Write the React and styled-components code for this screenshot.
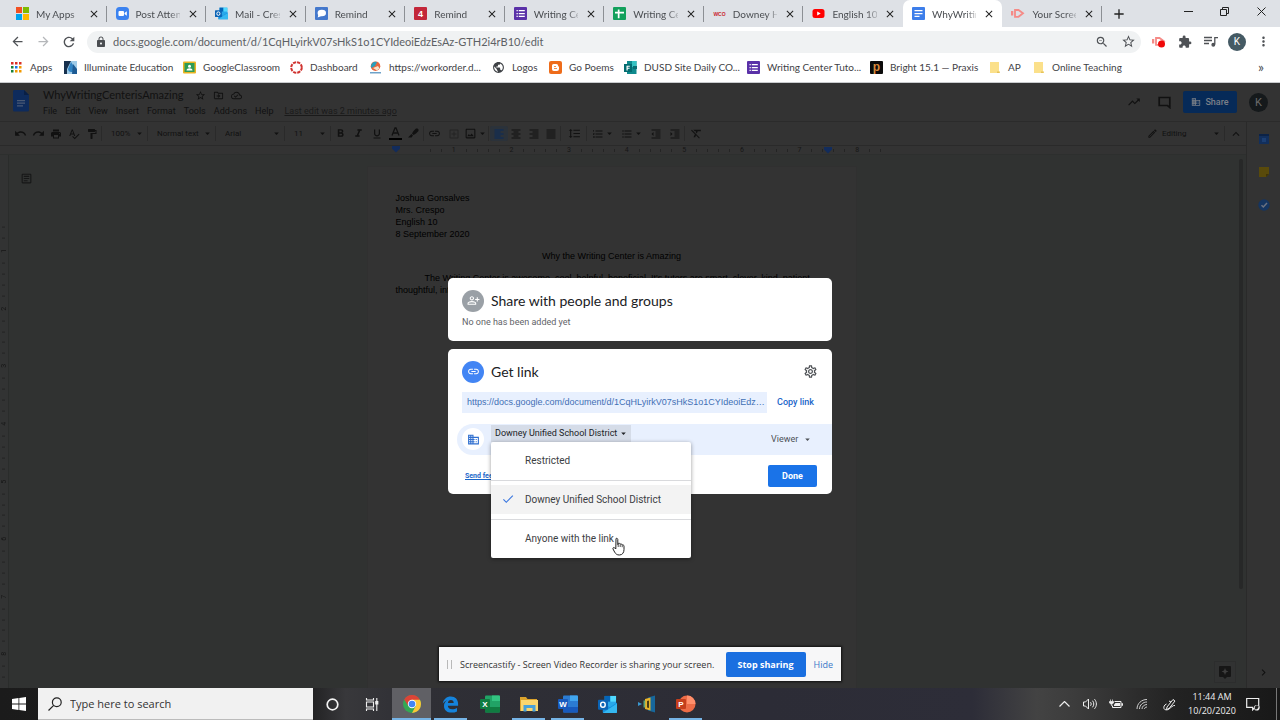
import React from "react";
import styled, { createGlobalStyle, css } from "styled-components";
import {
  MdArrowBack, MdArrowForward, MdRefresh, MdLock, MdStarBorder, MdExtension, MdMoreVert,
  MdUndo, MdRedo, MdPrint, MdSpellcheck, MdFormatPaint, MdFormatBold, MdFormatItalic,
  MdFormatUnderlined, MdLink, MdOutlineAddBox, MdOutlineImage, MdFormatAlignLeft,
  MdFormatAlignCenter, MdFormatAlignRight, MdFormatAlignJustify, MdFormatLineSpacing,
  MdFormatListNumbered, MdFormatListBulleted, MdFormatIndentDecrease, MdFormatIndentIncrease,
  MdFormatClear, MdOutlineEdit, MdKeyboardArrowUp, MdArrowDropDown, MdTrendingUp,
  MdOutlineDriveFileMove, MdOutlineCloudDone, MdDomain, MdOutlinePersonAddAlt, MdOutlineSettings,
  MdCheck, MdClose, MdAdd, MdKeyboardArrowRight, MdOutlineArticle, MdPublic, MdZoomOut,
} from "react-icons/md";

const ui = `"Open Sans", "Noto Sans", sans-serif`;
const uiNarrow = `Lato, "Open Sans", sans-serif`;
const roboto = `Roboto, "Liberation Sans", sans-serif`;
const arial = `"Liberation Sans", Arial, sans-serif`;
const display = `Lato, Roboto, sans-serif`;

const Global = createGlobalStyle`
  * { box-sizing: border-box; }
  html, body { margin: 0; padding: 0; }
  body { background: #333; font-family: ${ui}; overflow: hidden; }
  button, select, input { font: inherit; color: inherit; margin: 0; padding: 0; border: 0; background: none; }
  button { cursor: pointer; white-space: nowrap; }
  svg { display: block; flex: none; }
  ul { list-style: none; margin: 0; padding: 0; }
  h1, h2, p { margin: 0; font-weight: 400; }
`;

const Screen = styled.div`
  display: flex;
  flex-direction: column;
  min-height: 100vh;
`;

/* ---------- browser frame ---------- */

const BrowserFrame = styled.header`
  background: #fff;
  padding-bottom: 4px;
  border-bottom: 1px solid #c9cbce;
  color: #4a4d51;
  font-family: ${uiNarrow};
`;

const TabStrip = styled.div`
  display: flex;
  height: 27px;
  background: #dee1e6;
  padding-left: 7px;
`;

const TabList = styled.div`
  display: flex;
  flex: 1;
  min-width: 0;
`;

const Tab = styled.div`
  display: flex;
  align-items: center;
  flex: 1;
  min-width: 0;
  padding: 0 7px 0 9px;
  gap: 7px;
  position: relative;
  background: ${(p) => (p.$active ? "#fff" : "transparent")};
  border-radius: 7px 7px 0 0;
  ${(p) =>
    p.$divider &&
    css`
      &::after {
        content: "";
        position: absolute;
        right: 0;
        top: 6px;
        width: 1px;
        height: 16px;
        background: #8c8f94;
      }
    `}
`;

const TabTitle = styled.button`
  flex: 1;
  min-width: 0;
  overflow: hidden;
  white-space: nowrap;
  text-align: left;
  font-size: 10px;
  line-height: 16px;
  color: #4a4d51;
  mask-image: linear-gradient(to right, #000 75%, transparent 110%);
`;

const IconButton = styled.button`
  display: flex;
  align-items: center;
  justify-content: center;
  flex: none;
  width: ${(p) => p.$w || 26}px;
  height: ${(p) => p.$h || 26}px;
  color: ${(p) => p.$color || "#4f5256"};
`;

const WindowButtons = styled.div`
  display: flex;
  align-items: flex-start;
  padding: 0 1px 0 34px;
`;

const AddressRow = styled.div`
  display: flex;
  align-items: center;
  height: 29px;
  padding: 0 4px;
`;

const Omnibox = styled.div`
  display: flex;
  align-items: center;
  flex: 1;
  height: 22px;
  margin: 0 5px;
  padding-left: 8px;
  border-radius: 11px;
  background: #f0f2f3;
`;

const UrlInput = styled.input`
  flex: 1;
  min-width: 0;
  padding-left: 6px;
  font-size: 11px;
  line-height: 18px;
  color: #5d6165;
  outline: none;
`;

const Avatar = styled.span`
  display: flex;
  align-items: center;
  justify-content: center;
  width: ${(p) => p.$size}px;
  height: ${(p) => p.$size}px;
  border-radius: 50%;
  background: ${(p) => p.$bg};
  color: ${(p) => p.$fg};
  font-family: ${roboto};
  font-size: ${(p) => p.$font}px;
`;

const BookmarkBar = styled.nav`
  display: flex;
  align-items: center;
  height: 22px;
  padding: 0 6px 0 10px;
`;

const Bookmark = styled.a`
  display: flex;
  align-items: center;
  gap: 7px;
  width: ${(p) => p.$w}px;
  white-space: nowrap;
  font-size: 10px;
  line-height: 16px;
  color: #3f4246;
  text-decoration: none;
`;

const More = styled.button`
  margin-left: auto;
  width: 26px;
  font-size: 14px;
  line-height: 16px;
`;

/* ---------- document editor ---------- */

const Editor = styled.div`
  position: relative;
  flex: 1;
  display: flex;
  flex-direction: column;
  background: #333;
  color: #111;
  font-family: ${roboto};
  font-size: 9px;
`;

const DocHeader = styled.div`
  display: flex;
  height: 39px;
  padding: 5px 12px 0 13px;
  border-bottom: 1px solid #2b2b2b;
`;

const TitleBlock = styled.div`
  flex: 1;
  padding-left: 13px;
`;

const TitleRow = styled.div`
  display: flex;
  align-items: center;
  height: 14px;
  color: #111;
`;

const DocTitle = styled.h1`
  font-family: ${display};
  font-size: 11px;
  line-height: 14px;
  margin-right: 8px;
`;

const MenuRow = styled.div`
  display: flex;
  align-items: center;
  gap: 8px;
  height: 17px;
  line-height: 12px;
`;

const LastEdit = styled.a`
  margin-left: 3px;
  color: #1a1a1a;
`;

const HeaderActions = styled.div`
  display: flex;
  align-items: center;
  height: 28px;
`;

const ShareButton = styled.button`
  display: flex;
  align-items: center;
  justify-content: center;
  gap: 4px;
  width: 54px;
  height: 22px;
  margin: 0 12px 0 5px;
  border-radius: 2px;
  background: #062a58;
  color: #7b8088;
  font-size: 9px;
  font-weight: 500;
`;

const Workspace = styled.div`
  flex: 1;
  display: flex;
`;

const WorkColumn = styled.div`
  flex: 1;
  display: flex;
  flex-direction: column;
`;

const Toolbar = styled.div`
  display: flex;
  align-items: center;
  height: 24px;
  padding-left: 12px;
  border-bottom: 1px solid #2a2a2a;
`;

const ToolGroup = styled.div`
  display: flex;
  align-items: center;
  width: ${(p) => p.$w}px;
  height: 15px;
  margin-left: ${(p) => (p.$push ? "auto" : `${p.$ml || 0}px`)};
  border-right: ${(p) => (p.$last ? 0 : 1)}px solid #2a2a2a;
`;

const Tool = styled.button`
  display: flex;
  align-items: center;
  justify-content: center;
  flex: ${(p) => (p.$w ? `0 0 ${p.$w}px` : 1)};
  height: 15px;
  border-radius: 2px;
  color: ${(p) => (p.$on ? "#0a2a5a" : "#111")};
  background: ${(p) => (p.$on ? "#2b323a" : "none")};
`;

const Picker = styled.label`
  display: flex;
  align-items: center;
  width: 100%;
  padding-left: ${(p) => p.$pad ?? 9}px;
  padding-right: ${(p) => p.$end ?? 2}px;
  select {
    appearance: none;
    flex: 1;
    min-width: 0;
    outline: none;
    font-size: 8px;
    line-height: 12px;
  }
`;

const HorizontalRuler = styled.div`
  display: flex;
  height: 9px;
  padding-left: 368px;
  border-bottom: 1px solid #2d2f2e;
  color: #161616;
`;

const RulerMargin = styled.div`
  display: flex;
  justify-content: flex-end;
  width: 57px;
  padding-right: 25px;
`;

const RulerScale = styled.div`
  display: grid;
  grid-template-columns: repeat(8, 1fr);
  width: 461px;
`;

const RulerCell = styled.div`
  display: flex;
  position: relative;
  align-items: center;
  justify-content: space-around;
  writing-mode: ${(p) => (p.$vertical ? "vertical-rl" : "horizontal-tb")};
  transform: ${(p) => (p.$vertical ? "rotate(180deg)" : "none")};
  font-size: 7px;
  line-height: 8px;
`;

const Tick = styled.i`
  width: ${(p) => (p.$vertical ? 3 : 1)}px;
  height: ${(p) => (p.$vertical ? 1 : 3)}px;
  background: #242424;
`;

const RightMarker = styled.span`
  position: absolute;
  right: -4px;
  top: 1px;
`;

const CanvasRow = styled.div`
  flex: 1;
  display: flex;
  background: #303231;
`;

const VerticalRuler = styled.div`
  width: 9px;
  padding-top: 67px;
  background: #323333;
  border-right: 1px solid #2a2c2b;
  color: #161616;
`;

const VerticalScale = styled.div`
  display: grid;
  grid-template-rows: repeat(8, 1fr);
  height: 461px;
`;

const Canvas = styled.div`
  position: relative;
  flex: 1;
  display: flex;
  justify-content: center;
  padding: 11px 25px 0 0;
`;

const OutlineButton = styled.button`
  position: absolute;
  left: 11px;
  top: 17px;
  color: #161717;
`;

const ExploreButton = styled.button`
  position: absolute;
  right: 3px;
  bottom: 5px;
  width: 22px;
  height: 22px;
  display: flex;
  align-items: center;
  justify-content: center;
  border: 1px solid #2c2d2d;
  background: #313232;
`;

const ScrollTrack = styled.div`
  width: 7px;
  padding-top: 4px;
`;

const ScrollThumb = styled.div`
  width: 4px;
  height: 430px;
  border-radius: 2px;
  background: #272828;
`;

const Paper = styled.article`
  width: 490px;
  padding: 25px 28px;
  background: #333;
  border: 1px solid #303030;
  border-bottom: 0;
  font-family: ${arial};
  font-size: 9px;
  line-height: 12px;
  color: #000;
`;

const Centered = styled.p`
  margin: 10px 0;
  text-align: center;
`;

const Indented = styled.p`
  text-indent: 29px;
`;

const SidePanel = styled.aside`
  display: flex;
  flex-direction: column;
  align-items: center;
  gap: 21px;
  width: 34px;
  padding: 11px 0 9px;
  border-left: 1px solid #2a2a2a;
`;

const PanelToggle = styled.button`
  margin-top: auto;
  color: #111;
`;

/* ---------- share dialog ---------- */

const Backdrop = styled.div`
  position: absolute;
  inset: 0;
  display: flex;
  align-items: center;
  justify-content: center;
`;

const Dialog = styled.div`
  display: flex;
  flex-direction: column;
  gap: 8px;
  width: 384px;
  color: #202124;
`;

const Card = styled.section`
  padding: 12px 0 ${(p) => p.$bottom}px;
  border-radius: 5px;
  background: #fff;
`;

const CardHead = styled.div`
  display: flex;
  align-items: center;
  gap: 7px;
  padding: 0 14px;
  height: 22px;
`;

const RoundIcon = styled.span`
  display: flex;
  align-items: center;
  justify-content: center;
  width: 22px;
  height: 22px;
  border-radius: 50%;
  background: ${(p) => p.$bg};
  color: ${(p) => p.$fg || "#fff"};
`;

const CardTitle = styled.h2`
  flex: 1;
  font-family: ${display};
  font-size: 14px;
  line-height: 20px;
`;

const CardNote = styled.p`
  padding: 4px 14px 0;
  font-size: 9px;
  line-height: 12px;
  color: #5f6368;
`;

const LinkRow = styled.div`
  display: flex;
  align-items: center;
  gap: 10px;
  padding: 0 18px 0 14px;
  margin-top: 9px;
`;

const LinkInput = styled.input`
  flex: 1;
  min-width: 0;
  height: 21px;
  padding: 0 1px 0 5px;
  background: #e8f0fe;
  color: #3f6fb5;
  font-family: ${arial};
  font-size: 9px;
  text-overflow: ellipsis;
  outline: none;
`;

const CopyButton = styled.button`
  color: #1a66c9;
  font-size: 9px;
  font-weight: 500;
`;

const AccessRow = styled.div`
  display: flex;
  align-items: center;
  gap: 7px;
  height: 31px;
  margin: 11px 0 0 9px;
  padding: 0 19px 0 5px;
  border-radius: 16px 0 0 16px;
  background: #e8f0fe;
`;

const AccessMenu = styled.div`
  position: relative;
  align-self: flex-start;
  padding-top: 1px;
`;

const AccessButton = styled.button`
  display: flex;
  align-items: center;
  justify-content: space-between;
  width: 140px;
  height: 17px;
  padding: 0 2px 0 4px;
  background: #d5dce8;
  font-size: 9px;
  color: #202326;
`;

const Menu = styled.ul`
  position: absolute;
  left: 0;
  top: 18px;
  z-index: 2;
  width: 200px;
  padding: 4px 0 5px;
  border-radius: 2px;
  background: #fff;
  box-shadow: 0 1px 4px rgba(0, 0, 0, 0.4);
`;

const MenuItem = styled.li`
  display: flex;
  align-items: center;
  height: 29px;
  padding-left: 10px;
  gap: 10px;
  font-size: 10px;
  color: #3c4043;
  background: ${(p) => (p.$selected ? "#f3f3f3" : "none")};
  &::before {
    content: "";
    display: ${(p) => (p.$selected ? "none" : "block")};
    width: 14px;
  }
`;

const MenuDivider = styled.li`
  height: 1px;
  margin: 5px 0 4px;
  background: #d9dadd;
`;

const RoleSelect = styled.label`
  display: flex;
  align-items: center;
  gap: 1px;
  margin-left: auto;
  color: #4d5156;
  select {
    appearance: none;
    width: 30px;
    outline: none;
  }
`;

const CardFoot = styled.div`
  display: flex;
  align-items: center;
  justify-content: space-between;
  margin-top: 10px;
  padding: 0 15px 0 17px;
`;

const FeedbackLink = styled.a`
  font-size: 7px;
  font-weight: 700;
  color: #1a66c9;
`;

const DoneButton = styled.button`
  width: 49px;
  height: 22px;
  border-radius: 2px;
  background: #1a73e8;
  color: #fff;
  font-size: 9px;
  font-weight: 700;
`;

const Pointer = styled.svg`
  position: absolute;
  left: 121px;
  top: 95px;
`;

const SharingBar = styled.div`
  position: absolute;
  left: 50%;
  bottom: 7px;
  transform: translateX(-50%);
  display: flex;
  align-items: center;
  width: 402px;
  height: 34px;
  padding: 0 8px;
  background: #f7f7f8;
  box-shadow: 0 0 2px 1px #111;
  font-family: ${ui};
  font-size: 9px;
  color: #333;
  white-space: nowrap;
`;

const Grip = styled.span`
  width: 5px;
  height: 9px;
  margin-right: 8px;
  border: solid #b9b9b9;
  border-width: 0 1px;
`;

const StopButton = styled.button`
  width: 80px;
  height: 25px;
  margin: 0 8px 0 auto;
  border-radius: 2px;
  background: #1a6fe0;
  color: #fff;
  font-weight: 700;
`;

const HideLink = styled.button`
  color: #3b78c8;
`;

/* ---------- task bar ---------- */

const TaskBar = styled.footer`
  display: flex;
  height: 32px;
  background: linear-gradient(to right, #1b1b1b 0, #1f1f20 24%, #38383b 27%, #2f2f35 32%, #2c2c36 60%, #2d2d38 76%, #434343 81%, #3c3c3c 84%, #222 92%, #181818 100%);
  color: #eee;
`;

const SearchBox = styled.label`
  display: flex;
  align-items: center;
  gap: 8px;
  width: 275px;
  padding-left: 10px;
  background: #f1f1f1;
  border-bottom: 1px solid #bbb;
  color: #222;
  input {
    flex: 1;
    min-width: 0;
    font-size: 11px;
    outline: none;
  }
  input::placeholder {
    color: #333;
    opacity: 1;
  }
`;

const TaskButton = styled.button`
  display: flex;
  align-items: center;
  justify-content: center;
  flex: none;
  width: ${(p) => p.$w || 39}px;
  background: ${(p) => (p.$active ? "#606065" : "none")};
  position: relative;
  &::after {
    content: "";
    position: absolute;
    left: ${(p) => (p.$active ? 0 : 3)}px;
    right: ${(p) => (p.$active ? 0 : 3)}px;
    bottom: 0;
    height: 2px;
    background: ${(p) => (p.$open ? "#76b4e6" : "transparent")};
  }
`;

const Tray = styled.div`
  display: flex;
  align-items: center;
  margin-left: auto;
  padding-right: 3px;
`;

const Clock = styled.time`
  width: 56px;
  text-align: center;
  font-size: 9px;
  line-height: 14px;
`;

const ShowDesktop = styled.button`
  width: 1px;
  height: 32px;
  margin-left: 10px;
  background: #777;
`;

/* ---------- drawings ---------- */

const Tile = ({ size = 13, color, letter, fg = "#fff", font = 9 }) => (
  <svg width={size} height={size} viewBox="0 0 13 13">
    <rect width="13" height="13" rx="1" fill={color} />
    <text x="6.5" y="10" fontSize={font} fontWeight="700" fontFamily="Liberation Sans" textAnchor="middle" fill={fg}>{letter}</text>
  </svg>
);

const MicrosoftLogo = () => (
  <svg width="13" height="13" viewBox="0 0 13 13">
    <path d="M0 0h6v6H0z" fill="#f25022" /><path d="M7 0h6v6H7z" fill="#7fba00" />
    <path d="M0 7h6v6H0z" fill="#00a4ef" /><path d="M7 7h6v6H7z" fill="#ffb900" />
  </svg>
);

const ZoomLogo = () => (
  <svg width="13" height="13" viewBox="0 0 13 13">
    <rect width="13" height="13" rx="3.5" fill="#3b82f0" />
    <rect x="2.5" y="4" width="5.5" height="5" rx="1" fill="#fff" /><path d="M8.5 6l2.3-1.7v4.4L8.5 7z" fill="#fff" />
  </svg>
);

const OutlookLogo = ({ size = 13 }) => (
  <svg width={size} height={size} viewBox="0 0 20 20">
    <path d="M7 1h12v12H7z" fill="#28a8ea" /><path d="M7 1h6v6H7z" fill="#0364b8" /><path d="M13 1h6v6h-6z" fill="#50d9ff" />
    <path d="M5 8l7.500 5L20 8v10a1 1 0 0 1-1 1H6a1 1 0 0 1-1-1z" fill="#1490df" /><path d="M5 19L20 9v9a1 1 0 0 1-1 1z" fill="#35b8f1" />
    <rect y="5" width="10.500" height="10.500" rx="1" fill="#0a63b5" />
    <ellipse cx="5.200" cy="10.200" rx="2.400" ry="2.700" fill="none" stroke="#fff" strokeWidth="1.500" />
  </svg>
);

const RemindLogo = () => (
  <svg width="13" height="13" viewBox="0 0 13 13">
    <rect width="13" height="13" rx="1" fill="#4478cc" />
    <ellipse cx="6.800" cy="6" rx="4.200" ry="3.200" fill="#fff" /><path d="M3.500 7l-.8 3.500L6.500 9z" fill="#fff" />
  </svg>
);

const FormsLogo = () => (
  <svg width="13" height="13" viewBox="0 0 13 13">
    <rect width="13" height="13" rx="1" fill="#5a31a8" />
    <path d="M2.500 3h1.300v1.300H2.500zM2.500 5.900h1.300v1.300H2.500zM2.500 8.800h1.300v1.300H2.500zM4.800 3h6v1.300h-6zM4.800 5.900h6v1.300h-6zM4.800 8.800h6v1.300h-6z" fill="#fff" />
  </svg>
);

const SheetsLogo = () => (
  <svg width="13" height="13" viewBox="0 0 13 13">
    <rect width="13" height="13" rx="1" fill="#12a05c" /><path d="M4.800 2.500h1.700v2.300h4.500v1.700H6.500v4.700H4.800V6.500H2V4.800h2.800z" fill="#fff" />
  </svg>
);

const WcoLogo = () => (
  <svg width="13" height="13" viewBox="0 0 13 13">
    <text x="6.500" y="8.500" fontSize="5" fontWeight="700" fontFamily="Liberation Sans" textAnchor="middle" fill="#c9252b">WCO</text>
  </svg>
);

const YoutubeLogo = () => (
  <svg width="13" height="13" viewBox="0 0 13 13">
    <rect x=".5" y="2" width="12" height="9" rx="2.500" fill="#f00" /><path d="M5.200 4.500l3.500 2-3.500 2z" fill="#fff" />
  </svg>
);

const DocsTabLogo = () => (
  <svg width="13" height="13" viewBox="0 0 13 13">
    <rect width="13" height="13" rx="1" fill="#3d7eea" />
    <path d="M2.500 3h8v1.300h-8zM2.500 5.900h8v1.300h-8zM2.500 8.800h5v1.300h-5z" fill="#fff" />
  </svg>
);

const ScreencastifyLogo = ({ recording }) => (
  <svg width="14" height="13" viewBox="0 0 14 13">
    <path d="M4 3h3.500l4.500 3.200L7.500 9.800H4z" fill="none" stroke="#f58b87" strokeWidth="1.800" />
    <path d="M0 4h2.300v4.500H0z" fill="#f58b87" />
    {recording && <circle cx="9.500" cy="9" r="3.500" fill="#f00808" />}
  </svg>
);

const AppsGrid = () => (
  <svg width="13" height="13" viewBox="0 0 13 13">
    {[0, 1, 2].map((r) => [0, 1, 2].map((c) => (
      <rect key={`${r}${c}`} x={1 + c * 4} y={1 + r * 4} width="2.500" height="2.500"
        fill={[["#d93025", "#d93025", "#d93025"], ["#188038", "#1a73e8", "#f29900"], ["#188038", "#f29900", "#f29900"]][r][c]} />
    )))}
  </svg>
);

const IlluminateLogo = () => (
  <svg width="13" height="13" viewBox="0 0 13 13">
    <rect width="13" height="13" fill="#9fcbe8" /><path d="M0 0h7L3 8v5H0z" fill="#17304d" />
    <path d="M7 1l4 6a3.500 3.500 0 0 1-7 1z" fill="#3184c4" /><path d="M9 3l4 5v5H8z" fill="#1d5b94" />
  </svg>
);

const ClassroomLogo = () => (
  <svg width="13" height="13" viewBox="0 0 13 13">
    <rect y=".5" width="13" height="12" rx="1" fill="#eab421" /><rect x="1.500" y="2" width="10" height="9" fill="#2e9b57" />
    <circle cx="6.500" cy="5.300" r="1.500" fill="#fff" /><path d="M3.500 9.500c0-3 6-3 6 0z" fill="#fff" />
  </svg>
);

const DashboardLogo = () => (
  <svg width="13" height="13" viewBox="0 0 13 13">
    <circle cx="6.500" cy="6.500" r="5.300" fill="none" stroke="#d0322f" strokeWidth="2" strokeDasharray="3.200 .96" />
  </svg>
);

const WorkorderLogo = () => (
  <svg width="13" height="13" viewBox="0 0 13 13">
    <circle cx="6.500" cy="5.200" r="4.800" fill="#e8663c" /><path d="M2 7a4.800 4.800 0 0 1 6-6L6 5z" fill="#28a0bd" />
    <path d="M4 7l5-2 1.500 2.500L8 9.500z" fill="#f6e3c8" /><path d="M1 11h11v1.500H1z" fill="#6fa2c8" />
  </svg>
);

const BloggerLogo = () => (
  <svg width="13" height="13" viewBox="0 0 13 13">
    <rect width="13" height="13" rx="2" fill="#ee6c1a" />
    <path d="M4.500 3h2.700a2 2 0 0 1 2 2v.6h.8V8a2 2 0 0 1-2 2H4.800a1.800 1.800 0 0 1-1.800-1.800V4.500A1.500 1.500 0 0 1 4.500 3z" fill="#fff" />
    <path d="M5 5h2v.8H5zM5 7.300h3v.8H5z" fill="#ee6c1a" />
  </svg>
);

const OfficeFormsLogo = () => (
  <svg width="13" height="13" viewBox="0 0 13 13">
    <path d="M3 0h9.500v13H3z" fill="#0f8a8d" /><path d="M8 0h4.500v6H8z" fill="#36c2c2" /><rect y="3" width="8" height="8" fill="#036c70" />
    <path d="M2.500 4.800h3.300v1H3.700v.9h1.900v1H3.700v1.800H2.500z" fill="#fff" /><path d="M9 5h4v3H9z" fill="#0b6e72" />
  </svg>
);

const Folder = () => (
  <svg width="13" height="13" viewBox="0 0 13 13">
    <path d="M2 1h9v9.500h1V12H2z" fill="#fbe08a" /><path d="M9 10.500h2.500V12H9z" fill="#e5c25a" />
  </svg>
);

const PlaylistIcon = () => (
  <svg width="14" height="12" viewBox="0 0 14 12" fill="none" stroke="#4f5256" strokeWidth="1.300">
    <path d="M0 1.500h8M0 4.500h8M0 7.500h5M10.800 8.500V1.600H14" /><circle cx="9.300" cy="8.800" r="1.300" fill="#4f5256" />
  </svg>
);

const RestoreIcon = () => (
  <svg width="9" height="9" viewBox="0 0 9 9" fill="none" stroke="#222">
    <path d="M.5 2.500h6v6h-6zM2.500 2.500v-2h6v6h-2" />
  </svg>
);

const MinimizeIcon = () => (
  <svg width="9" height="9" viewBox="0 0 9 9" stroke="#222"><path d="M0 4.500h9" /></svg>
);

const CrossIcon = () => (
  <svg width="9" height="9" viewBox="0 0 9 9" stroke="#222"><path d="M.5.5l8 8M8.500.5l-8 8" /></svg>
);

const DocsLogo = () => (
  <svg width="17" height="25" viewBox="0 0 17 25">
    <path d="M2 2h9l5 5v15a1.500 1.500 0 0 1-1.500 1.500h-13A1.500 1.500 0 0 1 0 22V3.500A1.500 1.500 0 0 1 2 2z" fill="#0e2b5c" />
    <path d="M11 2l5 5h-5z" fill="#091f45" /><path d="M4 12h8v1.200H4zM4 14.600h8v1.200H4zM4 17.200h6v1.200H4z" fill="#4a5a75" />
  </svg>
);

const TextColorIcon = () => (
  <svg width="13" height="13" viewBox="0 0 13 13">
    <path d="M3 8.500L6 1h1l3 7.500M4 6h5" fill="none" stroke="#111" strokeWidth="1.300" /><path d="M0 11h13v2H0z" fill="#000" />
  </svg>
);

const HighlighterIcon = () => (
  <svg width="11" height="11" viewBox="0 0 11 11"><path d="M5.500 3L8 .5h1.500l1 1V3L8 5.500 5.500 7 4 5.500zM3.500 6L5 7.500 3.500 9.500H0z" fill="#111" /></svg>
);

const CommentIcon = () => (
  <svg width="13" height="13" viewBox="0 0 13 13"><path d="M1.200 1.500h10.600v10L9.500 9.500H1.200z" fill="none" stroke="#111" strokeWidth="1.700" /></svg>
);

const CalendarLogo = () => (
  <svg width="12" height="12" viewBox="0 0 12 12"><rect x="1" y="1" width="10" height="10" fill="#122f5c" /><path d="M1 1h10v2H1z" fill="#0c2347" /><path d="M4 5h4v4H4z" fill="#1c3f73" /></svg>
);

const KeepLogo = () => (
  <svg width="12" height="12" viewBox="0 0 12 12"><path d="M1 1h10v7l-3 3H1z" fill="#594a0b" /><path d="M8 11V8h3z" fill="#403507" /></svg>
);

const TasksLogo = () => (
  <svg width="12" height="12" viewBox="0 0 12 12"><circle cx="6" cy="6" r="5.700" fill="#153560" /><path d="M3.500 6.300l1.800 1.700 3.700-4" fill="none" stroke="#6b7280" strokeWidth="1.500" /></svg>
);

const ExploreIcon = () => (
  <svg width="12" height="13" viewBox="0 0 12 13"><path d="M1 0h10a1 1 0 0 1 1 1v9a1 1 0 0 1-1 1H8l-2 2-2-2H1a1 1 0 0 1-1-1V1a1 1 0 0 1 1-1z" fill="#161616" /><path d="M6 2l1 2.500L9.500 5.500 7 6.500 6 9 5 6.500 2.500 5.500 5 4.500z" fill="#3d3d3d" /></svg>
);

const MarginMarker = () => (
  <svg width="8" height="7" viewBox="0 0 8 7"><path d="M0 0h8v2.500L4 6.500 0 2.500z" fill="#122c5c" /></svg>
);

const ChromeLogo = () => (
  <svg width="18" height="18" viewBox="0 0 18 18">
    <circle cx="9" cy="9" r="9" fill="#34a853" />
    <path d="M9 9L1.200 4.500A9 9 0 0 1 16.800 4.500z" fill="#db4437" />
    <path d="M9 4.800h7.950A9 9 0 0 1 9 18l3.700-7z" fill="#fbc638" /><path d="M1.200 4.500L5.300 11 9 4.800z" fill="#db4437" />
    <circle cx="9" cy="9" r="4.200" fill="#fff" /><circle cx="9" cy="9" r="3.300" fill="#4285f4" />
  </svg>
);

const EdgeLogo = () => (
  <svg width="17" height="17" viewBox="0 0 17 17">
    <path d="M.8 7.500C1.500 3.200 4.600.5 8.800.5c4.600 0 7.300 3.200 7.300 7.300v2H5.800c.2 2.400 2 3.500 4.400 3.500 1.800 0 3.400-.5 4.800-1.400v3.500c-1.500.8-3.300 1.200-5.300 1.200-4.700 0-7.700-2.700-7.700-6.700 0-2.600 1.300-4.700 3.600-5.900C4.200 4.500 2.300 5.500.8 7.500zM5.900 6.900h5.800c0-1.700-1-2.900-2.800-2.900S6.100 5.200 5.900 6.900z" fill="#1583dc" />
  </svg>
);

const OfficeTile = ({ base, light, dark, letter, round }) => (
  <svg width="20" height="18" viewBox="0 0 20 18">
    {round ? (
      <><circle cx="11" cy="9" r="8.500" fill={base} /><path d="M11 .5A8.500 8.500 0 0 1 19.500 9H11z" fill={light} /></>
    ) : (
      <><rect x="5" y=".5" width="15" height="17" rx="1" fill={base} /><path d="M12 .5h7a1 1 0 0 1 1 1V6h-8z" fill={light} /><path d="M5 12h15v4.500a1 1 0 0 1-1 1H6a1 1 0 0 1-1-1z" fill={dark} /></>
    )}
    <rect y="4" width="10" height="10" rx="1" fill={dark} />
    <text x="5" y="12" fontSize="8" fontWeight="700" fontFamily="Liberation Sans" textAnchor="middle" fill="#fff">{letter}</text>
  </svg>
);

const ExplorerLogo = () => (
  <svg width="18" height="16" viewBox="0 0 18 16">
    <path d="M0 1h6l1.500 2H17v12H0z" fill="#dba32c" /><path d="M1 4h17v11H1z" fill="#fbd66e" />
    <path d="M3.500 9h12v6.500h-3V12H6.500v3.500h-3z" fill="#48a1da" />
  </svg>
);

const ReaderLogo = () => (
  <svg width="18" height="18" viewBox="0 0 18 18">
    <path d="M10 2.500L17 .5v17L10 15.500z" fill="#17679b" /><path d="M7 4l5.500-1.500v13L7 14z" fill="#e6b52c" />
    <path d="M9 6l2-.5v7.500l-2-.5z" fill="#4a3d16" /><path d="M5.500 5.500h1.700v7H5.500z" fill="#58a37c" /><path d="M0 7l4 2-4 2z" fill="#3a97cf" />
  </svg>
);

const WindowsLogo = () => (
  <svg width="14" height="14" viewBox="0 0 14 14" fill="#fff"><path d="M0 2l6.500-.9v5.500H0zM7.300 1L14 0v6.600H7.300zM0 7.400h6.500v5.500L0 12zM7.300 7.400H14V14l-6.700-1z" /></svg>
);

const SearchIcon = () => (
  <svg width="14" height="14" viewBox="0 0 14 14" fill="none" stroke="#222" strokeWidth="1.200"><circle cx="8.800" cy="5.200" r="4.400" /><path d="M5.700 8.300L.5 13.500" /></svg>
);

const CortanaIcon = () => (
  <svg width="13" height="13" viewBox="0 0 13 13"><circle cx="6.500" cy="6.500" r="5.300" fill="none" stroke="#f3f3f3" strokeWidth="1.700" /></svg>
);

const TaskViewIcon = () => (
  <svg width="14" height="13" viewBox="0 0 14 13" fill="none" stroke="#eee" strokeWidth="1.100"><path d="M1.500 4h7v5h-7zM1.500 0v2h7V0M1.500 13v-2h7v2M11.800 0v13" /><path d="M10.800 3.500h2v2.500h-2z" fill="#eee" /></svg>
);

const ChevronUp = () => (
  <svg width="11" height="6" viewBox="0 0 11 6" fill="none" stroke="#eee" strokeWidth="1.200"><path d="M.5 5.500l5-5 5 5" /></svg>
);

const VolumeIcon = () => (
  <svg width="14" height="12" viewBox="0 0 14 12" fill="none" stroke="#eee"><path d="M.5 4h2L5.500 1v10L2.500 8h-2zM7.500 4.200c.9 1 .9 2.600 0 3.600M9.500 2.700c1.700 2 1.700 4.600 0 6.600M11.500 1.200c2.500 3 2.500 6.600 0 9.600" /></svg>
);

const BatteryIcon = () => (
  <svg width="14" height="11" viewBox="0 0 14 11">
    <path d="M5.500 2.500h6.500v6H3.500v-2" fill="none" stroke="#eee" /><path d="M6.500 4H11v3H5V5.500z" fill="#eee" />
    <path d="M12.500 4.200H14v2.600h-1.500z" fill="#eee" />
    <path d="M1.500.5v2M3.500.5v2M.5 2.500h4V4L3.300 5H1.700L.5 4zM2.500 5v2" fill="#eee" stroke="#eee" strokeWidth=".7" />
  </svg>
);

const WifiIcon = () => (
  <svg width="12" height="12" viewBox="0 0 12 12" fill="none" stroke="#ccc"><path d="M1 11C1 5.500 5.500 1.500 11 1.500M3.500 11c0-4 3.500-7 7.500-7M6 11c0-2.500 2.200-4.500 5-4.500M8.500 11c0-1.200 1-2 2.500-2" /></svg>
);

const PenIcon = () => (
  <svg width="14" height="13" viewBox="0 0 14 13" fill="none" stroke="#eee"><path d="M4 9l6-7.500 2 1.500-6 7.500-2.500 1zM3.500 6C1 7 .5 9 1 10.500s3 2 5 .5 4-4 6-3.500M8 4L6 3" /></svg>
);

const NotificationIcon = () => (
  <svg width="14" height="14" viewBox="0 0 14 14"><path d="M.7 1.500h12v8.800H9L6.700 12.800V10.300h-6z" fill="none" stroke="#eee" strokeWidth="1.200" /><circle cx="10.800" cy="10.800" r="2.800" fill="#eee" /><path d="M9.500 12.500A2.300 2.300 0 0 1 12.500 9a3 3 0 0 1-3 3.500z" fill="#222" /></svg>
);

/* ---------- data ---------- */

const tabs = [
  { title: "My Apps", icon: <MicrosoftLogo /> },
  { title: "Post Attend", icon: <ZoomLogo /> },
  { title: "Mail - Cresp", icon: <OutlookLogo /> },
  { title: "Remind", icon: <RemindLogo /> },
  { title: "Remind", icon: <Tile color="#c3273a" letter="4" /> },
  { title: "Writing Cer", icon: <FormsLogo /> },
  { title: "Writing Cer", icon: <SheetsLogo /> },
  { title: "Downey Hi", icon: <WcoLogo /> },
  { title: "English 10:", icon: <YoutubeLogo />, bare: true },
  { title: "WhyWriting", icon: <DocsTabLogo />, active: true },
  { title: "Your Screer", icon: <ScreencastifyLogo /> },
];

const bookmarks = [
  { label: "Apps", w: 54, icon: <AppsGrid /> },
  { label: "Illuminate Education", w: 119, icon: <IlluminateLogo /> },
  { label: "GoogleClassroom", w: 107, icon: <ClassroomLogo /> },
  { label: "Dashboard", w: 79, icon: <DashboardLogo /> },
  { label: "https://workorder.d...", w: 123, icon: <WorkorderLogo /> },
  { label: "Logos", w: 57, icon: <MdPublic size={13} /> },
  { label: "Go Poems", w: 75, icon: <BloggerLogo /> },
  { label: "DUSD Site Daily CO...", w: 123, icon: <OfficeFormsLogo /> },
  { label: "Writing Center Tuto...", w: 123, icon: <FormsLogo /> },
  { label: "Bright 15.1 — Praxis", w: 118, icon: <Tile color="#0b0b0b" letter="p" fg="#d98a3a" font={12} /> },
  { label: "AP", w: 44, icon: <Folder /> },
  { label: "Online Teaching", w: 100, icon: <Folder /> },
];

const menus = ["File", "Edit", "View", "Insert", "Format", "Tools", "Add-ons", "Help"];

const Caret = () => <MdArrowDropDown size={11} />;

function BrowserTop() {
  return (
    <BrowserFrame>
      <TabStrip>
        <TabList>
          {tabs.map((t, i) => (
            <Tab key={i} $active={t.active} $divider={!t.active && !t.bare}>
              {t.icon}
              <TabTitle>{t.title}</TabTitle>
              <IconButton $w={12} $h={12} $color="#222" aria-label="Close tab"><MdClose size={12} /></IconButton>
            </Tab>
          ))}
        </TabList>
        <IconButton $w={34} $h={27} $color="#222" aria-label="New tab"><MdAdd size={16} /></IconButton>
        <WindowButtons>
          <IconButton $w={36} $h={23} aria-label="Minimize"><MinimizeIcon /></IconButton>
          <IconButton $w={37} $h={23} aria-label="Restore"><RestoreIcon /></IconButton>
          <IconButton $w={36} $h={23} aria-label="Close window"><CrossIcon /></IconButton>
        </WindowButtons>
      </TabStrip>
      <AddressRow>
        <IconButton aria-label="Back"><MdArrowBack size={15} /></IconButton>
        <IconButton $color="#b5b7ba" aria-label="Forward"><MdArrowForward size={15} /></IconButton>
        <IconButton aria-label="Reload"><MdRefresh size={16} /></IconButton>
        <Omnibox>
          <MdLock size={12} />
          <UrlInput aria-label="Address" defaultValue="docs.google.com/document/d/1CqHLyirkV07sHkS1o1CYIdeoiEdzEsAz-GTH2i4rB10/edit" />
          <IconButton aria-label="Zoom"><MdZoomOut size={14} /></IconButton>
          <IconButton aria-label="Bookmark this page"><MdStarBorder size={15} /></IconButton>
        </Omnibox>
        <IconButton aria-label="Screencastify"><ScreencastifyLogo recording /></IconButton>
        <IconButton aria-label="Extensions"><MdExtension size={14} /></IconButton>
        <IconButton aria-label="Media"><PlaylistIcon /></IconButton>
        <IconButton aria-label="Profile"><Avatar $size={18} $font={10} $bg="#455a64" $fg="#fff">K</Avatar></IconButton>
        <IconButton aria-label="Browser menu"><MdMoreVert size={15} /></IconButton>
      </AddressRow>
      <BookmarkBar>
        {bookmarks.map((b) => (
          <Bookmark key={b.label} href="#" $w={b.w}>{b.icon}{b.label}</Bookmark>
        ))}
        <More aria-label="More bookmarks">»</More>
      </BookmarkBar>
    </BrowserFrame>
  );
}

function ToolPicker({ label, value, pad, end }) {
  return (
    <Picker $pad={pad} $end={end}>
      <select aria-label={label}><option>{value}</option></select>
      <Caret />
    </Picker>
  );
}

function FormatBar() {
  return (
    <Toolbar>
      <ToolGroup $w={90}>
        <Tool aria-label="Undo"><MdUndo size={13} /></Tool>
        <Tool aria-label="Redo"><MdRedo size={13} /></Tool>
        <Tool aria-label="Print"><MdPrint size={12} /></Tool>
        <Tool aria-label="Spelling"><MdSpellcheck size={12} /></Tool>
        <Tool aria-label="Paint format"><MdFormatPaint size={12} /></Tool>
      </ToolGroup>
      <ToolGroup $w={46}><ToolPicker label="Zoom" value="100%" /></ToolGroup>
      <ToolGroup $w={68}><ToolPicker label="Style" value="Normal text" /></ToolGroup>
      <ToolGroup $w={69}><ToolPicker label="Font" value="Arial" /></ToolGroup>
      <ToolGroup $w={46}><ToolPicker label="Font size" value="11" /></ToolGroup>
      <ToolGroup $w={93}>
        <Tool aria-label="Bold"><MdFormatBold size={13} /></Tool>
        <Tool aria-label="Italic"><MdFormatItalic size={13} /></Tool>
        <Tool aria-label="Underline"><MdFormatUnderlined size={12} /></Tool>
        <Tool aria-label="Text color"><TextColorIcon /></Tool>
        <Tool aria-label="Highlight"><HighlighterIcon /></Tool>
      </ToolGroup>
      <ToolGroup $w={64} $ml={1}>
        <Tool aria-label="Insert link"><MdLink size={13} /></Tool>
        <Tool aria-label="Add comment"><MdOutlineAddBox size={12} color="#242424" /></Tool>
        <Tool aria-label="Insert image"><MdOutlineImage size={13} /><Caret /></Tool>
      </ToolGroup>
      <ToolGroup $w={71} $ml={1}>
        <Tool $on aria-label="Align left"><MdFormatAlignLeft size={12} /></Tool>
        <Tool aria-label="Align center"><MdFormatAlignCenter size={12} /></Tool>
        <Tool aria-label="Align right"><MdFormatAlignRight size={12} /></Tool>
        <Tool aria-label="Justify"><MdFormatAlignJustify size={12} /></Tool>
      </ToolGroup>
      <ToolGroup $w={25} $ml={1}><Tool aria-label="Line spacing"><MdFormatLineSpacing size={13} /></Tool></ToolGroup>
      <ToolGroup $w={96} $ml={2}>
        <Tool $w={29} aria-label="Numbered list"><MdFormatListNumbered size={12} /><Caret /></Tool>
        <Tool $w={29} aria-label="Bulleted list"><MdFormatListBulleted size={12} /><Caret /></Tool>
        <Tool aria-label="Decrease indent"><MdFormatIndentDecrease size={12} /></Tool>
        <Tool aria-label="Increase indent"><MdFormatIndentIncrease size={12} /></Tool>
      </ToolGroup>
      <ToolGroup $w={22} $last><Tool aria-label="Clear formatting"><MdFormatClear size={13} /></Tool></ToolGroup>
      <ToolGroup $w={78} $push>
        <MdOutlineEdit size={11} />
        <ToolPicker label="Mode" value="Editing" pad={4} />
      </ToolGroup>
      <ToolGroup $w={21} $last><Tool aria-label="Hide menus"><MdKeyboardArrowUp size={14} /></Tool></ToolGroup>
    </Toolbar>
  );
}

function Scale({ vertical }) {
  return Array.from({ length: 8 }, (_, i) => (
    <RulerCell key={i} $vertical={vertical}>
      <Tick $vertical={vertical} /><Tick $vertical={vertical} />
      {i + 1}
      <Tick $vertical={vertical} /><Tick $vertical={vertical} />
      {!vertical && i === 6 && <RightMarker><MarginMarker /></RightMarker>}
    </RulerCell>
  ));
}

function ShareDialog() {
  return (
    <Dialog role="dialog" aria-label="Share">
      <Card $bottom={13}>
        <CardHead>
          <RoundIcon $bg="#9aa0a6"><MdOutlinePersonAddAlt size={13} /></RoundIcon>
          <CardTitle>Share with people and groups</CardTitle>
        </CardHead>
        <CardNote>No one has been added yet</CardNote>
      </Card>
      <Card $bottom={7}>
        <CardHead>
          <RoundIcon $bg="#4285f4"><MdLink size={13} /></RoundIcon>
          <CardTitle>Get link</CardTitle>
          <IconButton $w={15} $h={15} aria-label="Link settings"><MdOutlineSettings size={15} /></IconButton>
        </CardHead>
        <LinkRow>
          <LinkInput readOnly aria-label="Document link" value="https://docs.google.com/document/d/1CqHLyirkV07sHkS1o1CYIdeoiEdzEsAz-GTH2i4rB10/edit" />
          <CopyButton>Copy link</CopyButton>
        </LinkRow>
        <AccessRow>
          <RoundIcon $bg="#fff" $fg="#2f6fd0"><MdDomain size={13} /></RoundIcon>
          <AccessMenu>
            <AccessButton aria-haspopup="listbox" aria-expanded="true">Downey Unified School District<Caret /></AccessButton>
            <Menu role="listbox" aria-label="Link access">
              <MenuItem role="option">Restricted</MenuItem>
              <MenuDivider role="separator" />
              <MenuItem role="option" aria-selected="true" $selected><MdCheck size={14} color="#3b78e0" />Downey Unified School District</MenuItem>
              <MenuDivider role="separator" />
              <MenuItem role="option">Anyone with the link</MenuItem>
              <Pointer width="14" height="19" viewBox="0 0 14 19">
                <path d="M4 1.500c.9-.5 1.800 0 1.800 1v5l.4-1c.9-.6 1.700-.1 1.900.7.900-.6 1.800-.1 2 .8.900-.4 1.900 0 1.900 1.200v3.300c0 3-1.500 5.500-4.700 5.500-2.300 0-3.500-1-4.600-2.800L1 12c-.5-1 .7-2 1.600-1.200L3.800 12z" fill="#fff" stroke="#222" />
                <path d="M6.200 7v3M8.200 7.500v2.500M10.200 8.200v2" fill="none" stroke="#222" strokeWidth=".8" />
              </Pointer>
            </Menu>
          </AccessMenu>
          <RoleSelect>
            <select aria-label="Role"><option>Viewer</option></select>
            <Caret />
          </RoleSelect>
        </AccessRow>
        <CardFoot>
          <FeedbackLink href="#">Send feedback</FeedbackLink>
          <DoneButton>Done</DoneButton>
        </CardFoot>
      </Card>
    </Dialog>
  );
}

function DocEditor() {
  return (
    <Editor>
      <DocHeader>
        <DocsLogo />
        <TitleBlock>
          <TitleRow>
            <DocTitle>WhyWritingCenterisAmazing</DocTitle>
            <IconButton $w={18} $h={14} $color="#111" aria-label="Star"><MdStarBorder size={11} /></IconButton>
            <IconButton $w={18} $h={14} $color="#111" aria-label="Move"><MdOutlineDriveFileMove size={11} /></IconButton>
            <IconButton $w={18} $h={14} $color="#111" aria-label="Saved"><MdOutlineCloudDone size={11} /></IconButton>
          </TitleRow>
          <MenuRow>
            {menus.map((m) => <button key={m}>{m}</button>)}
            <LastEdit href="#">Last edit was 2 minutes ago</LastEdit>
          </MenuRow>
        </TitleBlock>
        <HeaderActions>
          <IconButton $w={34} $color="#111" aria-label="Activity"><MdTrendingUp size={14} /></IconButton>
          <IconButton $w={27} $color="#111" aria-label="Comments"><CommentIcon /></IconButton>
          <ShareButton><MdDomain size={10} />Share</ShareButton>
          <Avatar $size={19} $font={11} $bg="#15191b" $fg="#6a6a6a">K</Avatar>
        </HeaderActions>
      </DocHeader>
      <Workspace>
        <WorkColumn>
          <FormatBar />
          <HorizontalRuler>
            <RulerMargin><MarginMarker /></RulerMargin>
            <RulerScale><Scale /></RulerScale>
          </HorizontalRuler>
          <CanvasRow>
            <VerticalRuler><VerticalScale><Scale vertical /></VerticalScale></VerticalRuler>
            <Canvas>
              <OutlineButton aria-label="Show outline"><MdOutlineArticle size={13} /></OutlineButton>
              <Paper>
                <p>Joshua Gonsalves</p>
                <p>Mrs. Crespo</p>
                <p>English 10</p>
                <p>8 September 2020</p>
                <Centered>Why the Writing Center is Amazing</Centered>
                <Indented>The Writing Center is awesome, cool, helpful, beneficial. It's tutors are smart, clever, kind, patient, thoughtful, intelligent.</Indented>
              </Paper>
              <ExploreButton aria-label="Explore"><ExploreIcon /></ExploreButton>
            </Canvas>
            <ScrollTrack><ScrollThumb /></ScrollTrack>
          </CanvasRow>
        </WorkColumn>
        <SidePanel>
          <CalendarLogo />
          <KeepLogo />
          <TasksLogo />
          <PanelToggle aria-label="Hide side panel"><MdKeyboardArrowRight size={13} /></PanelToggle>
        </SidePanel>
      </Workspace>
      <Backdrop><ShareDialog /></Backdrop>
      <SharingBar>
        <Grip />
        Screencastify - Screen Video Recorder is sharing your screen.
        <StopButton>Stop sharing</StopButton>
        <HideLink>Hide</HideLink>
      </SharingBar>
    </Editor>
  );
}

function WindowsBar() {
  return (
    <TaskBar>
      <TaskButton $w={38} aria-label="Start"><WindowsLogo /></TaskButton>
      <SearchBox><SearchIcon /><input placeholder="Type here to search" aria-label="Search" /></SearchBox>
      <TaskButton aria-label="Cortana"><CortanaIcon /></TaskButton>
      <TaskButton $w={40} aria-label="Task view"><TaskViewIcon /></TaskButton>
      <TaskButton $active $open aria-label="Chrome"><ChromeLogo /></TaskButton>
      <TaskButton $open aria-label="Edge"><EdgeLogo /></TaskButton>
      <TaskButton aria-label="Excel"><OfficeTile base="#21a366" light="#33c481" dark="#107c41" letter="X" /></TaskButton>
      <TaskButton $open aria-label="File Explorer"><ExplorerLogo /></TaskButton>
      <TaskButton $open aria-label="Word"><OfficeTile base="#2b7cd3" light="#41a5ee" dark="#185abd" letter="W" /></TaskButton>
      <TaskButton $w={40} aria-label="Outlook"><OutlookLogo size={19} /></TaskButton>
      <TaskButton aria-label="Reader"><ReaderLogo /></TaskButton>
      <TaskButton $open aria-label="PowerPoint"><OfficeTile round base="#ed6c47" light="#ff8f6b" dark="#c43e1c" letter="P" /></TaskButton>
      <Tray>
        <IconButton aria-label="Hidden icons"><ChevronUp /></IconButton>
        <IconButton aria-label="Volume"><VolumeIcon /></IconButton>
        <IconButton aria-label="Battery"><BatteryIcon /></IconButton>
        <IconButton aria-label="Network"><WifiIcon /></IconButton>
        <IconButton $w={29} aria-label="Pen"><PenIcon /></IconButton>
        <Clock>11:44 AM<br />10/20/2020</Clock>
        <IconButton aria-label="Notifications"><NotificationIcon /></IconButton>
        <ShowDesktop aria-label="Show desktop" />
      </Tray>
    </TaskBar>
  );
}

export default function App() {
  return (
    <>
      <Global />
      <Screen>
        <BrowserTop />
        <DocEditor />
        <WindowsBar />
      </Screen>
    </>
  );
}
